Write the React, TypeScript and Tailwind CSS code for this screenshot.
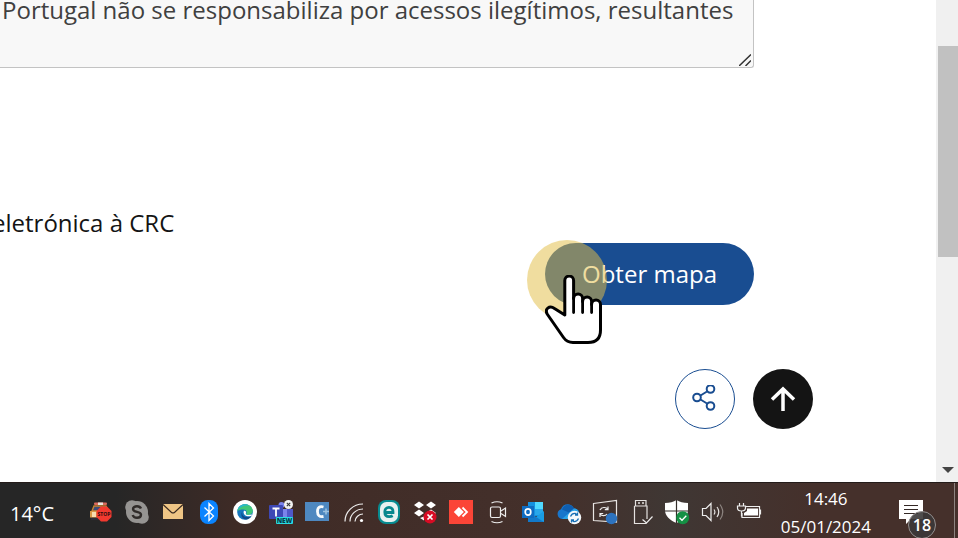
import type { ReactNode } from "react";

const terms = "Portugal não se responsabiliza por acessos ilegítimos, resultantes";

function Glyph({ children }: { children: ReactNode }) {
  return (
    <svg viewBox="0 0 24 24" className="size-6 overflow-visible" fill="none" aria-hidden="true">
      {children}
    </svg>
  );
}

const trayIcons: { name: string; art: ReactNode }[] = [
  {
    name: "Stop",
    art: (
      <>
        <rect x="5" y="2.500" width="13" height="2.500" rx="1" fill="#d9695b" />
        <rect x="9" y="2.500" width="5" height="2.500" fill="#e9e4df" />
        <path d="M5 6h12l2 5H3z" fill="#3d4b78" stroke="#c88332" strokeWidth="1.400" />
        <path d="M1 11h10v8H3l-2-2z" fill="#d99a48" />
        <path d="M3 12h4v5H3z" fill="#f5ddb0" />
        <path d="M2 17.500h8V20H2z" fill="#2c2c36" />
        <path d="M12 6.500h6l4.500 4.500v6L18 21.500h-6L7.500 17v-6z" fill="#f2392f" />
        <text x="15" y="16" textAnchor="middle" fontSize="5" fontWeight="700" fill="#2a0d0d">STOP</text>
      </>
    ),
  },
  {
    name: "Skype",
    art: (
      <>
        <circle cx="12" cy="12" r="11" fill="#969492" />
        <circle cx="7" cy="7" r="6.800" fill="#969492" />
        <circle cx="17" cy="17" r="6.800" fill="#969492" />
        <path d="M16 8.500C15.300 6.800 13.800 6.200 12 6.200c-2.300 0-4 1-4 2.800 0 4 8 1.800 8 5.800 0 1.900-1.800 3-4 3-2.100 0-3.700-.8-4.300-2.800" stroke="#302b29" strokeWidth="2.400" />
      </>
    ),
  },
  {
    name: "Correio",
    art: (
      <>
        <path d="M2 4h20v15H2z" fill="#efc585" />
        <path d="M2 4.500l8.300 7.700q1.700 1.400 3.400 0L22 4.500" stroke="#3a2a20" strokeWidth="1.200" />
      </>
    ),
  },
  {
    name: "Bluetooth",
    art: (
      <>
        <rect x="3" y="0" width="18" height="24" rx="8" fill="#0a84ff" />
        <path d="M7.500 7.500l9 8.500-4.500 4.500v-17l4.500 4.500-9 8.500" stroke="#fff" strokeWidth="1.300" />
      </>
    ),
  },
  {
    name: "Edge",
    art: (
      <>
        <circle cx="12" cy="12" r="12" fill="#fff" />
        <circle cx="12" cy="12" r="7.800" fill="#1476bd" />
        <path d="M4.300 11C5 6.800 8 4.200 12 4.200c4.500 0 7.800 3.200 7.800 6.600 0 2.700-2.100 4.100-4.500 4.100-1.500 0-2.400-.6-1.900-1.500.9-1.700-.2-4-3.200-4-2.400 0-4.800.6-5.900 1.600z" fill="#3fc779" />
        <path d="M4.300 11C5 6.800 8 4.200 12 4.200c2 0 3.500.6 4.600 1.500C12 5 7 6.500 4.300 11z" fill="#29b6d0" />
        <path d="M10 10.500c-2.500 3.200.4 7.300 5.400 6.500 1.300-.2 2.300-.7 3-1.200-1 1.900-2.900 3.300-4.900 3.800C9 19.500 6.500 14.500 10 10.500z" fill="#114a8b" />
        <path d="M10.900 10.800c1.600-.4 2.700 1 2 2.500-.4.900.4 1.700 1.900 1.800l4.300-.5-.4 1.100c-3.800 1.700-9.500-.2-7.800-4.900z" fill="#fff" />
      </>
    ),
  },
  {
    name: "Teams",
    art: (
      <>
        <path d="M11 9h13v8q0 4-4 4h-9z" fill="#5058c8" />
        <path d="M9 9h9v12H9z" fill="#7b83eb" />
        <circle cx="12.500" cy="5" r="3" fill="#7b83eb" />
        <rect x="0" y="5" width="14" height="14" rx="1" fill="#3e48b5" />
        <path d="M3.500 8.500h7M7 8.500v8" stroke="#fff" strokeWidth="1.800" />
        <circle cx="19.500" cy="4.500" r="4.500" fill="#f2f2f2" />
        <path d="M17.800 2.800l3.400 3.400M21.200 2.800l-3.400 3.400" stroke="#353535" strokeWidth="1.100" />
        <rect x="7" y="17" width="17" height="7" rx="1" fill="#28dce2" />
        <text x="15.500" y="23" textAnchor="middle" fontSize="6.500" fontWeight="800" fill="#073d49">NEW</text>
      </>
    ),
  },
  {
    name: "Ligação",
    art: (
      <>
        <path d="M0 2h24v19H0z" fill="#4e88c0" />
        <path d="M18.500 7q-6-1.500-6 4.500t6 5" stroke="#f6fafc" strokeWidth="2.800" />
        <path d="M18 11.500h6M21 8.500v6" stroke="#9fc3e0" strokeWidth="1.500" />
      </>
    ),
  },
  {
    name: "Rede",
    art: (
      <>
        <path d="M4 21.500C4 12 12 4 22 4M9 21.500C9 14.500 15 9 22 9M14 21.500C14 17.500 18 14 22 14" stroke="#eee" strokeWidth="1.200" />
        <circle cx="20.500" cy="20.500" r="1.600" fill="#fff" />
      </>
    ),
  },
  {
    name: "ESET",
    art: (
      <>
        <rect x="1" y="0" width="22" height="24" rx="8" fill="#078b90" />
        <rect x="3" y="2" width="18" height="20" rx="6.500" fill="#e7f1f0" />
        <path d="M8.500 12.500h7.500c.2-3.500-1.500-5.200-4-5.200S7.800 9.200 7.800 12s1.700 4.700 4.400 4.700c1.400 0 2.500-.3 3.500-.9" stroke="#07878d" strokeWidth="2.800" />
      </>
    ),
  },
  {
    name: "Dropbox",
    art: (
      <>
        <path d="M6 1.500l5 3.500-5 3.500L1 5zM18 1.500L23 5l-5 3.500L13 5zM6 9.500l5 3.500-5 3.500L1 13zM18 9.500l5 3.500-5 3.500-5-3.500zM7 18l4-1.500v4z" fill="#fff" />
        <circle cx="17" cy="17" r="6.500" fill="#d80c24" />
        <path d="M14.500 14.500l5 5M19.500 14.500l-5 5" stroke="#fff" strokeWidth="1.700" />
      </>
    ),
  },
  {
    name: "AnyDesk",
    art: (
      <>
        <path d="M0 0h24v24H0z" fill="#fb4537" />
        <path d="M9.800 7l5 5-5 5-5-5z" fill="#fff" />
        <path d="M13.500 7.500l4.500 4.500-4.500 4.500" stroke="#fff" strokeWidth="1.800" />
      </>
    ),
  },
  {
    name: "Câmara",
    art: (
      <>
        <rect x="5.500" y="7" width="10" height="10.500" rx="1.500" stroke="#eee" strokeWidth="1.200" />
        <path d="M16 11l4.500-3v8.500L16 13.500M6.500 3Q12 .5 17.500 3M6.500 21.500Q12 24 17.500 21.500" stroke="#eee" strokeWidth="1.200" />
      </>
    ),
  },
  {
    name: "Outlook",
    art: (
      <>
        <path d="M7 2h15v14H7z" fill="#1490df" />
        <path d="M14 2h8v7h-8z" fill="#50d9ff" />
        <path d="M14 9h8v6h-8z" fill="#28a8ea" />
        <path d="M7 12l8 5 8-6v11H7z" fill="#1a9de4" />
        <path d="M7 12l16 10H7z" fill="#1279ca" />
        <rect x="1" y="6" width="12" height="12" fill="#0f6cc2" />
        <ellipse cx="7" cy="12" rx="2.800" ry="3.100" stroke="#fff" strokeWidth="1.700" />
      </>
    ),
  },
  {
    name: "OneDrive",
    art: (
      <>
        <path d="M5 19a5 5 0 0 1-1-9.700C5.500 3.500 14 2 17 8.500c3 0 5 2 5 5V19z" fill="#1976cc" />
        <path d="M5 9.500C7 4 14 3 17 8.500l-5 4z" fill="#0f5eb0" />
        <path d="M5 19l12-10.500c3 0 5 2 5 5V19z" fill="#2aa2e8" />
        <circle cx="17.500" cy="17.500" r="6.700" fill="#f4f8fb" />
        <path d="M13.500 16.500q1.500-3.500 5-3l2 1.500m0-2.500V15H18M21.500 18.500q-1.500 3.500-5 3l-2-1.500m0 2.500V20H17" stroke="#176fb5" strokeWidth="1.300" />
      </>
    ),
  },
  {
    name: "Projeção",
    art: (
      <>
        <path d="M.5 3.500l23-3v21.500L.5 20.500z" stroke="#e8e5e3" strokeWidth="1.200" />
        <path d="M7 10c1.500-3 6-3.500 8-.5m0-3v3.200h-3.200M14 14c-1.500 2-5 2.500-7-.2m0 3.200v-3.500h3.200" stroke="#eee" strokeWidth="1.200" />
        <circle cx="18.500" cy="18.500" r="5.700" fill="#2d73bf" />
      </>
    ),
  },
  {
    name: "USB",
    art: (
      <>
        <path d="M6.500 6V.5h10.500V6M5.500 6h12.500v13M5.500 6v17.500h12" stroke="#e5e2e0" strokeWidth="1.200" />
        <path d="M9 3h2M13 3h2" stroke="#e5e2e0" strokeWidth="1.300" />
        <path d="M13.500 19.500l4 3.500 6-6.500" stroke="#eee" strokeWidth="1.200" />
      </>
    ),
  },
  {
    name: "Segurança",
    art: (
      <>
        <path d="M11.500 0Q16 3 23 3v7c0 6-5 10.500-11.500 13C5 20.500 0 16 0 10V3q7 0 11.500-3z" fill="#fff" />
        <path d="M11.500 0v23M0 11h23" stroke="#332d29" strokeWidth="1.200" />
        <circle cx="17.700" cy="17.700" r="6.500" fill="#149044" />
        <path d="M14.500 17.700l2.500 2.500 4.300-4.500" stroke="#fff" strokeWidth="1.300" />
      </>
    ),
  },
  {
    name: "Som",
    art: (
      <>
        <path d="M1.500 8.500H5L10 3.500v17L5 15.500H1.500z" stroke="#eee" strokeWidth="1.200" />
        <path d="M13 9.500q1.800 2.500 0 5M16 7q3.500 5 0 10" stroke="#e5e2e0" strokeWidth="1.200" />
        <path d="M19 4.500q5.500 7.500 0 15" stroke="#8d8581" strokeWidth="1.200" />
      </>
    ),
  },
  {
    name: "Bateria",
    art: (
      <>
        <path d="M9 6.500h13.500v11H5V13M23.500 9.500v5" stroke="#eee" strokeWidth="1.200" />
        <path d="M10 8.500h11v7H7V13l3-2z" fill="#fff" />
        <path d="M2.500 3v3M6.500 3v3M.5 6h8v2q0 3-4 3t-4-3zM4.500 11v5H5" stroke="#eee" strokeWidth="1.200" />
      </>
    ),
  },
];

function HandPointer() {
  return (
    <svg viewBox="0 0 60 72" className="pointer-events-none absolute left-0 top-8 h-[72px] w-[60px]" aria-hidden="true">
      <path
        d="M19.800 40V5.500a4.400 4.400 0 0 1 8.800 0V23.500a4.400 4.400 0 0 1 9 0v3a4.300 4.300 0 0 1 9 0v3a4.400 4.400 0 0 1 8.900 0V55q0 12.500-12.500 12.500H28q-6 0-9.500-5L2.500 39.500C-1 34 4.500 30 9.500 33.500z"
        fill="#fff"
        stroke="#000"
        strokeWidth="3"
        strokeLinejoin="round"
      />
      <path d="M28.600 23v14.500M37.600 26v11.500M46.600 29v8.500" stroke="#000" strokeWidth="2.800" strokeLinecap="round" />
    </svg>
  );
}

export default function App() {
  return (
    <div className="flex h-screen flex-col overflow-hidden bg-white font-['Open_Sans','Noto_Sans',sans-serif]">
      <div className="flex min-h-0 flex-1">
        <main className="min-w-0 flex-1 overflow-hidden">
          <div className="mr-[182px]">
            <div className="relative -ml-5 -mt-2">
              <textarea
                readOnly
                rows={2}
                aria-label="Condições de utilização"
                defaultValue={terms}
                className="block h-[76px] w-full resize-none overflow-hidden whitespace-nowrap rounded-[3px] border border-t-0 border-[#c3c3c3] bg-[#f8f8f8] pl-[21px] text-[24px] leading-[36px] text-[#404040] outline-none"
              />
              <svg viewBox="0 0 12 12" className="absolute bottom-[2px] right-[3px] size-3" stroke="#333" strokeWidth="1.500" aria-hidden="true">
                <path d="M0 12L12 .5M6.500 12L12 6.500" />
              </svg>
            </div>
            <p className="-ml-2 mt-[137px] whitespace-nowrap text-[24px] leading-[36px] text-[#141414]">eletrónica à CRC</p>
            <div className="mt-[2px] flex justify-end">
              <div className="relative">
                <button type="button" className="block h-[62px] rounded-full bg-[#194d91] px-[37px] text-[24px] leading-[36px] text-white">
                  Obter mapa
                </button>
                <span className="pointer-events-none absolute -left-[18px] -top-[3px] size-20 rounded-full bg-[#e2be46]/52" />
                <HandPointer />
              </div>
            </div>
          </div>
          <div className="mr-[123px] mt-16 flex justify-end gap-[18px]">
            <button type="button" aria-label="Partilhar" className="grid size-[60px] place-items-center rounded-full border border-[#194d91] bg-white">
              <svg viewBox="0 0 28 28" className="size-7" fill="none" stroke="#194d91" strokeWidth="2" aria-hidden="true">
                <circle cx="6" cy="12.500" r="3.800" />
                <circle cx="19.500" cy="4" r="3.800" />
                <circle cx="19.500" cy="21" r="3.800" />
                <path d="M9.500 10.500l6.500-4M9.500 14.500l6.500 4" />
              </svg>
            </button>
            <button type="button" aria-label="Voltar ao topo" className="grid size-[60px] place-items-center rounded-full bg-[#141414]">
              <svg viewBox="0 0 28 28" className="size-7" fill="none" stroke="#fff" strokeWidth="3.500" aria-hidden="true">
                <path d="M14 26V4M3 14.500L14 4l11 10.500" />
              </svg>
            </button>
          </div>
        </main>
        <div className="flex w-[22px] shrink-0 flex-col justify-between bg-[#f0f0f0] pt-[46px] pl-[2px]">
          <div className="h-[211px] bg-[#c1c1c1]" />
          <svg viewBox="0 0 12 6" className="mb-[9px] ml-1 h-[6px] w-3" aria-hidden="true">
            <path d="M0 0h12L6 6z" fill="#444" />
          </svg>
        </div>
      </div>

      <footer className="flex h-14 shrink-0 items-center border-t border-[#241c1a] bg-[linear-gradient(90deg,#262626_12%,#3f2b26_25%,#44302b_58%,#3f3734_70%,#45302b_85%)] text-white">
        <span className="w-[83px] pl-[10px] pt-[6px] text-[20px] leading-6">14°C</span>
        <ul className="flex pt-[2px]">
          {trayIcons.map((icon) => (
            <li key={icon.name} className="flex w-9 justify-center">
              <button type="button" aria-label={icon.name} className="block">
                <Glyph>{icon.art}</Glyph>
              </button>
            </li>
          ))}
        </ul>
        <div className="ml-auto flex h-full items-center">
          <div className="pt-[4px] text-center text-[17px] leading-7">
            <div>14:46</div>
            <div>05/01/2024</div>
          </div>
          <button type="button" aria-label="18 notificações" className="relative ml-7 mr-[31px] block pt-[2px]">
            <svg viewBox="0 0 24 24" className="size-6" aria-hidden="true">
              <path d="M0 0h24v19H12l-5 5v-5H0z" fill="#fff" />
              <path d="M5 5.500h14M5 9.500h14M5 13.500h14" stroke="#332825" strokeWidth="1.200" />
            </svg>
            <span className="absolute left-[9px] top-[13px] grid size-7 place-items-center rounded-full border border-[#949090] bg-[#3b3939]/90 text-[16px] font-semibold leading-none">
              18
            </span>
          </button>
          <span className="mr-[3px] h-full w-px bg-[#8d8380]" />
        </div>
      </footer>
    </div>
  );
}
